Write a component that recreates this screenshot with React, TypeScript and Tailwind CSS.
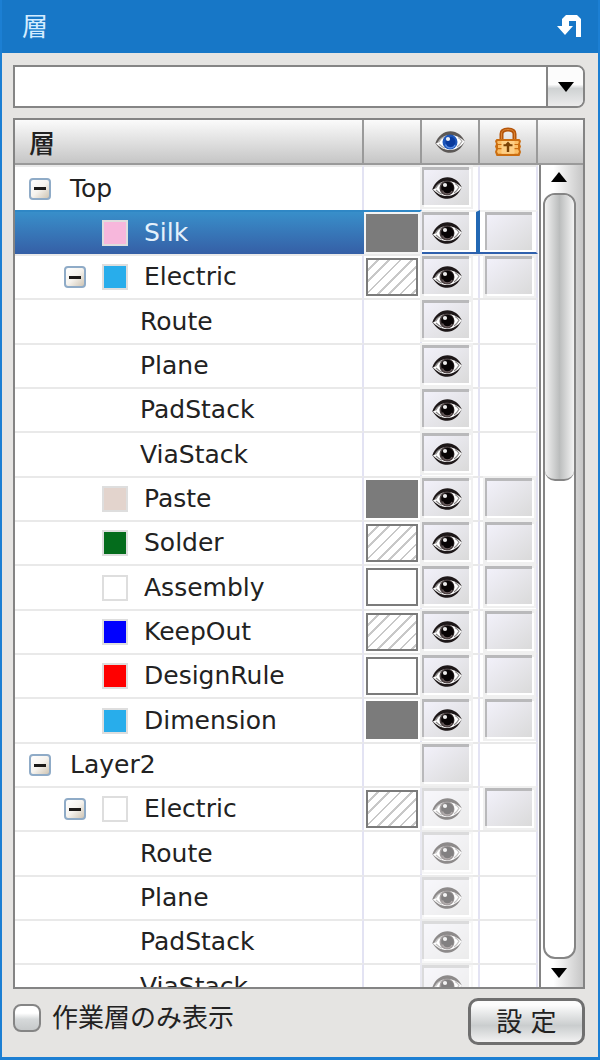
import { useState } from "react";

type Fill = "solid" | "hatch" | "empty";
type Layer = {
  name: string;
  level: 0 | 1 | 2;
  toggle?: boolean;
  swatch?: string;
  fill?: Fill;
  eye: "on" | "dim" | "none";
};

const layers: Layer[] = [
  { name: "Top", level: 0, toggle: true, eye: "on" },
  { name: "Silk", level: 1, swatch: "bg-[#f7b7dc]", fill: "solid", eye: "on" },
  { name: "Electric", level: 1, toggle: true, swatch: "bg-[#28adeb]", fill: "hatch", eye: "on" },
  { name: "Route", level: 2, eye: "on" },
  { name: "Plane", level: 2, eye: "on" },
  { name: "PadStack", level: 2, eye: "on" },
  { name: "ViaStack", level: 2, eye: "on" },
  { name: "Paste", level: 1, swatch: "bg-[#e3d4cd]", fill: "solid", eye: "on" },
  { name: "Solder", level: 1, swatch: "bg-[#046c1c]", fill: "hatch", eye: "on" },
  { name: "Assembly", level: 1, swatch: "bg-white", fill: "empty", eye: "on" },
  { name: "KeepOut", level: 1, swatch: "bg-[#0000ff]", fill: "hatch", eye: "on" },
  { name: "DesignRule", level: 1, swatch: "bg-[#ff0000]", fill: "empty", eye: "on" },
  { name: "Dimension", level: 1, swatch: "bg-[#28adeb]", fill: "solid", eye: "on" },
  { name: "Layer2", level: 0, toggle: true, eye: "none" },
  { name: "Electric", level: 1, toggle: true, swatch: "bg-white", fill: "hatch", eye: "dim" },
  { name: "Route", level: 2, eye: "dim" },
  { name: "Plane", level: 2, eye: "dim" },
  { name: "PadStack", level: 2, eye: "dim" },
  { name: "ViaStack", level: 2, eye: "dim" },
];

const fills: Record<Fill, string> = {
  solid: "bg-[#7b7b7b]",
  hatch: "bg-[repeating-linear-gradient(135deg,#fff_0_6px,#c8c8c8_6px_8px)]",
  empty: "bg-white",
};

function Eye({ blue = false }: { blue?: boolean }) {
  const dark = blue ? "#5c5856" : "#1d1718";
  return (
    <svg viewBox="0 0 30 22" className="h-[22px] w-[30px]" aria-hidden="true">
      <path d="M.5 12C4 4.500 9.500 1.500 15.500 1.500S26.500 5 29.500 10.500C26.500 17 21.500 20.500 15.500 20.500S5 18 .5 12z" fill="#fff" />
      <path d="M.2 12.800C3 4.500 9 .3 15.500.3 22 .3 27 4.500 29.900 10.500 25.500 6.200 21 4 15.500 4 10 4 5.500 6 2.800 11.500z" fill={dark} />
      <path d="M.2 11.500C4.500 16.500 9.500 19 15 19c5.500 0 11-3 14.700-8.500C26.500 17.500 21.500 21.800 15.500 21.800 9 21.800 4 18.500.2 11.500z" fill={dark} />
      <path d="M3.500 11.500C5 8.200 7 6.500 9.500 5.500M4 13c2 2 3.500 3.200 6 4.300M23 6.500c1.800 1 3 2.200 4 3.800-1.300 2.500-3 4.200-5 5.700" fill="none" stroke={dark} strokeOpacity=".5" strokeWidth="1.200" />
      <circle cx="15" cy="11" r="7.500" fill={blue ? "#1d56ba" : "#4a4041"} />
      <circle cx="15.500" cy="11" r={blue ? 5 : 6.300} fill={blue ? "#0a3a9c" : "#080405"} />
      <path d="M10.500 13.500c.9 2.400 2.700 3.500 5 3.400 2 0 3.800-1 4.600-3" fill="none" stroke={blue ? "#5f90e4" : "#6d5f60"} strokeWidth="1.200" />
      <circle cx="13" cy="8" r="2.100" fill="#fff" fillOpacity=".92" />
    </svg>
  );
}

function Lock() {
  return (
    <svg viewBox="0 0 28 30" className="h-[30px] w-7" aria-hidden="true">
      <path d="M7.500 14V7c0-3 2-4.500 6.500-4.500S20.500 4 20.500 7v7" fill="none" stroke="#b5550a" strokeWidth="4" />
      <path d="M7.500 13V7c0-3 2-4.500 6.500-4.500S20.500 4 20.500 7v6" fill="none" stroke="#dc8534" strokeWidth="1" />
      <path d="M2.500 12h23l1.500 2-1 3 1 2.500-1 2.500 1 3-1.500 4h-23L1 25l1-3-1-2.500L2 17l-1-3z" fill="#cb6d10" />
      <path d="M4 14h20l1 .8-1 2.200H4l-1-2.200zM4 18h20v3H4zM4 22.300h20l1 2.200-1 2.300H4l-1-2.300z" fill="#fcbf66" />
      <path d="M7.500 14h13v12.800h-13z" fill="#fecf85" />
      <path d="M14 14.500l2.500 2.800h2v1.900h-3.300V25h-2.400v-5.800H9.500v-1.900h2z" fill="#7a4206" />
    </svg>
  );
}

function Toggle({ name }: { name: string }) {
  return (
    <button
      type="button"
      aria-label={`${name} -`}
      className="flex size-[22px] shrink-0 items-center justify-center rounded border-2 border-[#8fabc7] bg-linear-to-br from-white via-[#f6f3ee] to-[#cfc5b4]"
    >
      <span className="h-[3px] w-3 bg-[#1c1a18]" />
    </button>
  );
}

const well =
  "flex h-[38px] w-[47px] items-center justify-center border-t-3 border-l-2 border-[#b9b9bb] bg-linear-to-br from-[#f2f1fa] to-[#dadada]";
const wellEdge = "shadow-[2px_2px_0_#fff,1px_1px_0_3px_#f0f0f0]";
const wellEdgeSelected = "shadow-[2px_2px_0_#fff]";

function LayerRow({ layer, selected, onSelect }: { layer: Layer; selected: boolean; onSelect: () => void }) {
  const indent = layer.level === 0 ? "pl-[14px]" : layer.level === 2 ? "pl-[125px]" : layer.toggle ? "pl-[49px]" : "pl-[87px]";
  const plain = "border-t-2 border-r-2 border-t-[#e9e9e9] border-r-[#e3e3f3] p-0 align-top";
  const edge = selected ? wellEdgeSelected : wellEdge;
  return (
    <tr onClick={onSelect} className="h-11 nth-[3n+1]:h-[45px]">
      <td
        className={
          selected
            ? "border-t-2 border-t-[#2f87c5] bg-linear-to-b from-[#388fca] to-[#355fa6] p-0 text-[#e4f1fb]"
            : "border-t-2 border-r-2 border-t-[#e9e9e9] border-r-[#e3e3f3] p-0"
        }
      >
        <div className={`flex items-center ${indent}`}>
          {layer.toggle && <Toggle name={layer.name} />}
          {layer.swatch && (
            <span className={`${layer.toggle ? "ml-4" : ""} size-[26px] shrink-0 border-2 border-[#dedede] ${layer.swatch}`} />
          )}
          <span className={layer.level === 0 ? "ml-[19px]" : layer.level === 1 ? "ml-4" : ""}>{layer.name}</span>
        </div>
      </td>
      <td
        className={
          selected
            ? "border-t-2 border-r-2 border-t-[#2f87c5] border-r-[#ededf3] bg-[#f4f4f4] p-0 pt-[2px] align-top"
            : `${plain} pt-[2px]`
        }
      >
        {layer.fill && <div className={`ml-[2px] h-[38px] w-[52px] border-2 border-[#7b7b7b] ${fills[layer.fill]}`} />}
      </td>
      <td
        className={
          selected
            ? "border-t-2 border-r-4 border-b-2 border-t-[#f0f0f0] border-r-[#2268b4] border-b-[#2f60ad] p-0 align-top"
            : plain
        }
      >
        <button type="button" aria-label={layer.name} className={`${well} ${edge} ${layer.eye === "dim" ? "opacity-50" : ""}`}>
          {layer.eye !== "none" && <Eye />}
        </button>
      </td>
      <td
        className={
          selected
            ? "border-t-2 border-r-2 border-b-2 border-t-[#f0f0f0] border-r-[#e3e3f3] border-b-[#2f60ad] p-0 align-top"
            : plain
        }
      >
        {layer.fill && <button type="button" aria-label={layer.name} className={`${well} ${edge} ml-[5px]`} />}
      </td>
    </tr>
  );
}

const headCell = "border-r-2 border-b-2 border-[#9a9a9a] bg-linear-to-b from-[#fbfbfb] to-[#c6c6c6] p-0";

export default function App() {
  const [selected, setSelected] = useState(1);
  return (
    <div className="flex h-screen flex-col border-2 border-t-0 border-b-3 border-[#1c7fd3] bg-[#e5e4e2] font-['DejaVu_Sans','Noto_Sans_CJK_JP',sans-serif] text-[25px] leading-8 text-[#222]">
      <header className="flex h-[53px] shrink-0 items-center justify-between bg-[#1777c7] pr-[17px] pl-5">
        <h1 className="text-[26px] text-[#d3ecff]">層</h1>
        <button type="button" aria-label="戻す">
          <svg viewBox="0 0 24 23" className="h-[23px] w-6" aria-hidden="true">
            <path d="M5 11V4l4-4h11l4 4v18h-5V6h-7v5h4l-8 9-8-9z" fill="#fff" />
          </svg>
        </button>
      </header>

      <main className="flex min-h-0 flex-1 flex-col py-3 pr-[13px] pl-[11px]">
        <div className="grid h-[43px] shrink-0 rounded-r-lg border-2 border-[#858585] bg-white">
          <select aria-label="層" className="col-start-1 row-start-1 appearance-none rounded-r-lg bg-transparent px-2">
            <option value=""></option>
          </select>
          <span className="pointer-events-none col-start-1 row-start-1 flex w-[37px] items-center justify-center justify-self-end rounded-r-md border-l-2 border-[#858585] bg-linear-to-b from-[#fcfcfc] from-45% via-[#cfd2d3] via-55% to-[#ececec]">
            <svg viewBox="0 0 16 10" className="h-[10px] w-4" aria-hidden="true">
              <path d="M0 0h16L8 10z" fill="#000" />
            </svg>
          </span>
        </div>

        <section className="mt-[10px] flex min-h-0 flex-1 border-2 border-[#848484] bg-white">
          <div className="min-w-0 flex-1 overflow-y-auto [scrollbar-width:none]">
            <table className="w-full table-fixed border-separate border-spacing-0 text-left">
              <thead className="sticky top-0 z-10">
                <tr className="h-[45px]">
                  <th className={`${headCell} pt-1 pl-[14px] text-[26px] font-medium`}>層</th>
                  <th className={`${headCell} w-[58px]`} />
                  <th className={`${headCell} w-[58px]`}>
                    <div className="flex justify-center">
                      <Eye blue />
                    </div>
                  </th>
                  <th className={`${headCell} w-[58px]`}>
                    <div className="flex justify-center">
                      <Lock />
                    </div>
                  </th>
                </tr>
              </thead>
              <tbody>
                {layers.map((layer, i) => (
                  <LayerRow key={i} layer={layer} selected={i === selected} onSelect={() => setSelected(i)} />
                ))}
              </tbody>
            </table>
          </div>
          <div className="flex w-[45px] shrink-0 flex-col">
            <div className="h-[45px] shrink-0 border-b-2 border-[#9a9a9a] bg-linear-to-b from-[#fbfbfb] to-[#c6c6c6]" />
            <div className="ml-px flex min-h-0 flex-1 flex-col items-center border-l-2 border-[#848484] bg-linear-to-r from-white from-30% to-[#c6c6c6] pr-[6px]">
              <button type="button" aria-label="上" className="flex h-7 w-full shrink-0 items-center justify-center">
                <svg viewBox="0 0 16 10" className="mt-[-4px] h-[10px] w-4" aria-hidden="true">
                  <path d="M0 10h16L8 0z" fill="#000" />
                </svg>
              </button>
              <div className="min-h-0 w-[33px] flex-1 rounded-xl border-2 border-[#858585] bg-white">
                <div className="h-[37.5%] rounded-[10px] border-b-2 border-[#858585] bg-linear-to-r from-[#f2f2f2] via-[#bbbdbd] to-[#f4f4f4]" />
              </div>
              <button type="button" aria-label="下" className="flex h-7 w-full shrink-0 items-center justify-center">
                <svg viewBox="0 0 16 10" className="h-[10px] w-4" aria-hidden="true">
                  <path d="M0 0h16L8 10z" fill="#000" />
                </svg>
              </button>
            </div>
          </div>
        </section>

        <footer className="mt-[9px] flex shrink-0 items-start justify-between text-[26px]">
          <label className="mt-1 flex items-center gap-[11px]">
            <input
              type="checkbox"
              className="size-7 appearance-none rounded-lg border-2 border-[#858585] bg-linear-to-b from-white from-30% via-[#d6d9da] via-55% to-[#c6c9ca]"
            />
            作業層のみ表示
          </label>
          <button
            type="button"
            className="h-[47px] w-[117px] rounded-[10px] border-[3px] border-[#6f6f6f] bg-linear-to-b from-[#fcfcfc] from-10% via-[#cacdce] via-60% to-[#f2f2f2]"
          >
            設 定
          </button>
        </footer>
      </main>
    </div>
  );
}
